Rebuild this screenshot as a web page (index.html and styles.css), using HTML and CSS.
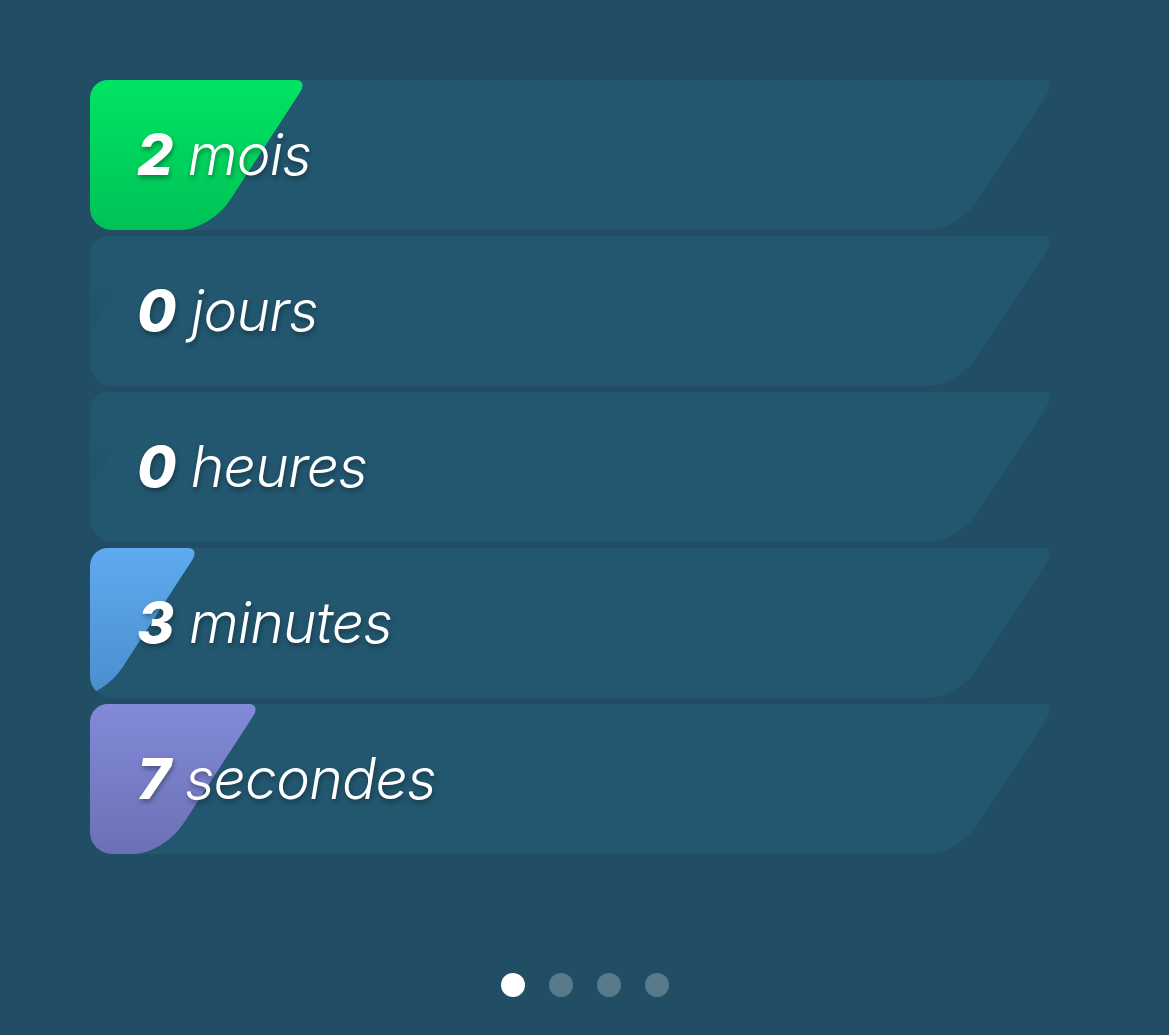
FILE: index.html
```html
<!DOCTYPE html>
<html lang="fr">
<head>
<meta charset="utf-8">
<title>Compte à rebours</title>
<link rel="stylesheet" href="styles.css">
</head>
<body>
<main class="page">
  <section class="bars">
    <div class="bar">
      <div class="fill fill-green" style="--w:218px"></div>
      <p class="label"><span class="num">2</span> <span class="unit">mois</span></p>
    </div>
    <div class="bar">
      <div class="fill fill-empty" style="--w:62px"></div>
      <p class="label"><span class="num">0</span> <span class="unit">jours</span></p>
    </div>
    <div class="bar">
      <div class="fill fill-empty" style="--w:62px"></div>
      <p class="label"><span class="num">0</span> <span class="unit">heures</span></p>
    </div>
    <div class="bar">
      <div class="fill fill-blue" style="--w:110px"></div>
      <p class="label"><span class="num">3</span> <span class="unit">minutes</span></p>
    </div>
    <div class="bar">
      <div class="fill fill-purple" style="--w:171px"></div>
      <p class="label"><span class="num">7</span> <span class="unit">secondes</span></p>
    </div>
  </section>
  <nav class="dots">
    <span class="dot active"></span>
    <span class="dot"></span>
    <span class="dot"></span>
    <span class="dot"></span>
  </nav>
</main>
</body>
</html>
```

FILE: styles.css
```css
html, body {
  margin: 0;
  padding: 0;
}
body {
  background: #214e64;
  font-family: Inter, "Noto Sans", "Liberation Sans", sans-serif;
  color: #fff;
  width: 1169px;
  height: 1035px;
  overflow: hidden;
}
.page {
  padding-top: 80px;
  display: flex;
  flex-direction: column;
}
.bars {
  margin-left: 90px;
  width: 966px;
  display: flex;
  flex-direction: column;
  gap: 6px;
}
.bar {
  position: relative;
  height: 150px;
  border-radius: 18px 0 0 22px;
  overflow: hidden;
  display: flex;
  align-items: center;
}
.bar::before {
  content: "";
  position: absolute;
  top: 0;
  bottom: 0;
  left: -160px;
  right: 0;
  background: #22576f;
  transform: skewX(-33deg);
  transform-origin: top;
  border-radius: 0 12px 30px 0;
}
.fill {
  position: absolute;
  top: 0;
  bottom: 0;
  left: -160px;
  width: calc(var(--w) + 160px);
  transform: skewX(-33deg);
  transform-origin: top;
  border-radius: 0 12px 30px 0;
}
.fill-green {
  background: linear-gradient(180deg, #00e463 0%, #00c257 100%);
}
.fill-blue {
  background: linear-gradient(180deg, #5eabef 0%, #4a8dcd 100%);
}
.fill-purple {
  background: linear-gradient(180deg, #828ad9 0%, #6c71b5 100%);
}
.fill-empty {
  background: linear-gradient(180deg, rgba(0, 0, 0, 0) 0%, rgba(0, 0, 0, 0) 25%, rgba(0, 0, 0, 0.03) 50%, rgba(0, 0, 0, 0.03) 100%);
  border-radius: 0 0 30px 0;
}
.label {
  position: relative;
  margin: -2px 0 0 47px;
  font-size: 57px;
  line-height: 1;
  font-style: italic;
  letter-spacing: -0.8px;
  text-shadow: 1px 3px 5px rgba(0, 0, 0, 0.35);
  white-space: nowrap;
}
.num {
  font-weight: 800;
}
.unit {
  font-weight: 300;
}
.dots {
  margin-top: 119px;
  display: flex;
  justify-content: center;
  gap: 24px;
}
.dot {
  width: 24px;
  height: 24px;
  border-radius: 50%;
  background: rgba(255, 255, 255, 0.25);
}
.dot.active {
  background: #fff;
}
```
